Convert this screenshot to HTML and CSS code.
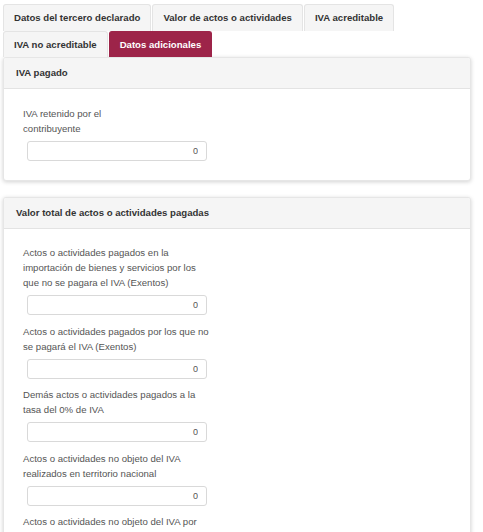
FILE: index.html
```html
<!DOCTYPE html>
<html lang="es">
<head>
<meta charset="utf-8">
<title>Datos adicionales</title>
<link rel="stylesheet" href="styles.css">
</head>
<body>
<div class="page">
  <ul class="tabs">
    <li class="tab">Datos del tercero declarado</li>
    <li class="tab">Valor de actos o actividades</li>
    <li class="tab">IVA acreditable</li>
    <li class="tab">IVA no acreditable</li>
    <li class="tab active">Datos adicionales</li>
  </ul>

  <section class="panel">
    <div class="panel-head">IVA pagado</div>
    <div class="panel-body">
      <div class="field">
        <label class="label">IVA retenido por el<br>contribuyente</label>
        <input class="input" type="text" value="0">
      </div>
    </div>
  </section>

  <section class="panel">
    <div class="panel-head">Valor total de actos o actividades pagadas</div>
    <div class="panel-body">
      <div class="field">
        <label class="label">Actos o actividades pagados en la<br>importación de bienes y servicios por los<br>que no se pagara el IVA (Exentos)</label>
        <input class="input" type="text" value="0">
      </div>
      <div class="field">
        <label class="label">Actos o actividades pagados por los que no<br>se pagará el IVA (Exentos)</label>
        <input class="input" type="text" value="0">
      </div>
      <div class="field">
        <label class="label">Demás actos o actividades pagados a la<br>tasa del 0% de IVA</label>
        <input class="input" type="text" value="0">
      </div>
      <div class="field">
        <label class="label">Actos o actividades no objeto del IVA<br>realizados en territorio nacional</label>
        <input class="input" type="text" value="0">
      </div>
      <div class="field">
        <label class="label">Actos o actividades no objeto del IVA por</label>
        <input class="input" type="text" value="0">
      </div>
    </div>
  </section>
</div>
</body>
</html>
```

FILE: styles.css
```css
* { box-sizing: border-box; }
html, body { margin: 0; padding: 0; background: #fff; }
body {
  font-family: "Liberation Sans", Arial, sans-serif;
  font-size: 9.6px;
  color: #333;
}
.page {
  width: 471px;
  padding: 4px 0 0 3px;
}
.tabs {
  list-style: none;
  margin: 0;
  padding: 0;
  display: flex;
  flex-wrap: wrap;
  width: 468px;
}
.tab {
  font-weight: bold;
  background: #f5f5f5;
  border: 1px solid #e4e4e4;
  border-bottom: none;
  border-radius: 3px 3px 0 0;
  padding: 0 10px;
  height: 27px;
  line-height: 26px;
  margin-right: 1px;
  color: #333;
}
.tab:nth-child(n+4) {
  height: 26px;
  line-height: 25px;
}
.tab.active {
  background: #9d2449;
  border-color: #9d2449;
  color: #fff;
}
.panel {
  width: 468px;
  background: #fff;
  border: 1px solid #e6e6e6;
  border-radius: 3px;
  box-shadow: 0 1px 4px rgba(0,0,0,0.18);
  margin-bottom: 16px;
  overflow: hidden;
}
.panel-head {
  background: #f5f5f5;
  border-bottom: 1px solid #e3e3e3;
  height: 31px;
  line-height: 29px;
  padding-left: 12px;
  font-weight: bold;
  color: #333;
}
.panel-body {
  padding: 16.5px 0 19px 19px;
}
.field {
  display: flex;
  flex-direction: column;
  align-items: flex-start;
  margin-bottom: 8.5px;
}
.field:last-child { margin-bottom: 0; }
.label {
  color: #555;
  line-height: 15px;
  margin-bottom: 5px;
}
.input {
  margin-left: 4px;
  width: 180px;
  height: 20px;
  border: 1px solid #d9d9d9;
  border-radius: 3px;
  text-align: right;
  padding: 0 8px;
  font-family: "Liberation Sans", Arial, sans-serif;
  font-size: 9px;
  color: #555;
  background: #fff;
}
```
